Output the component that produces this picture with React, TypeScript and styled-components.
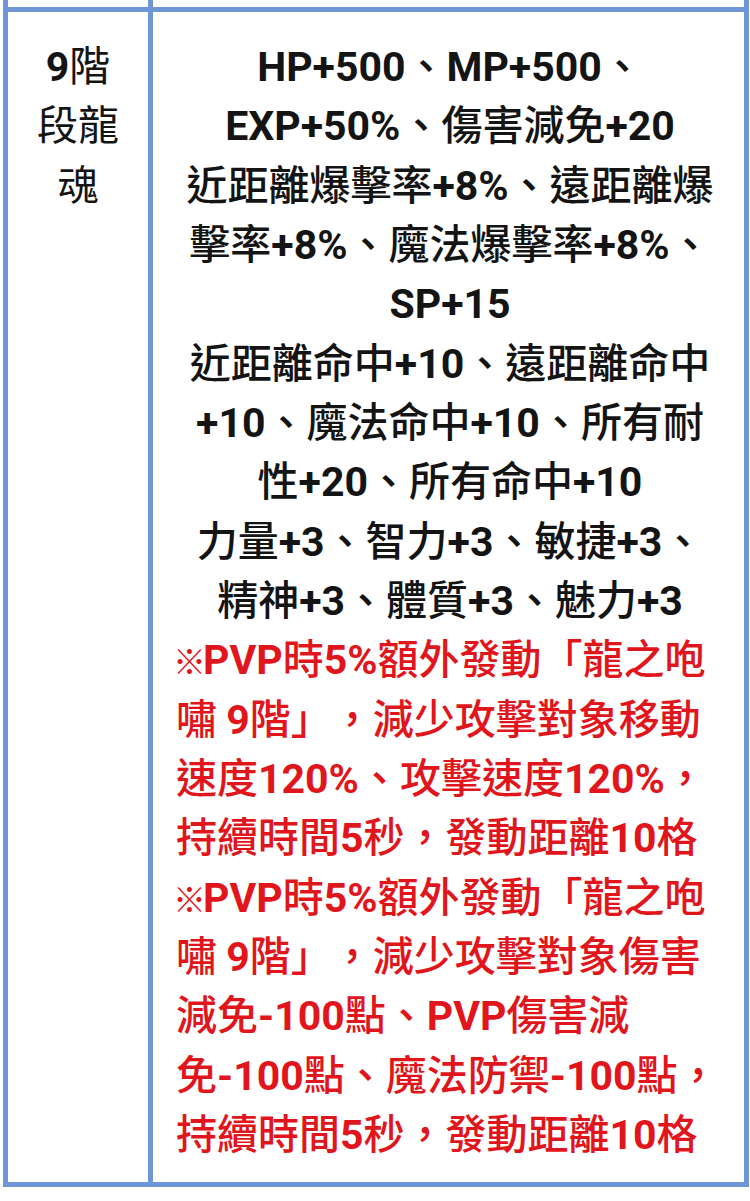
import React from "react";
import styled, { createGlobalStyle } from "styled-components";

const Global = createGlobalStyle`
  html, body { margin: 0; padding: 0; background: #ffffff; }
  body { font-family: "Noto Sans CJK TC", "Noto Sans", sans-serif; }
`;

const Table = styled.div`
  margin-left: 3px;
  width: 746px;
  display: grid;
  grid-template-columns: 140px 591px;
  grid-template-rows: 7px auto;
  column-gap: 5px;
  row-gap: 5px;
  padding: 0 5px 5px 5px;
  box-sizing: border-box;
  background: #6f97d8;
`;

const Cell = styled.div`
  background: #ffffff;
`;

const NameCell = styled(Cell)`
  padding: 22px 20px 21px;
  text-align: center;
`;

const DetailCell = styled(Cell)`
  padding: 22px 20px 21px 23px;
`;

const Line = styled.div<{ $red?: boolean; $left?: boolean }>`
  line-height: 59.33px;
  height: 59.33px;
  white-space: nowrap;
  text-align: ${(p) => (p.$left ? "left" : "center")};
  color: ${(p) => (p.$red ? "#e1161c" : "#141414")};
  font-size: 41px;
`;

const Latin = styled.span`
  font-family: "Roboto", "Noto Sans CJK TC", sans-serif;
  font-weight: 700;
`;

const Han = styled.span<{ $weight: number }>`
  font-family: "Noto Sans CJK TC", sans-serif;
  font-weight: ${(p) => p.$weight};
`;

const Mark = styled.span`
  font-family: "Noto Sans CJK TC", sans-serif;
  font-weight: 900;
  font-size: 33px;
  margin-left: -3px;
  margin-right: -3px;
`;

/* full-width bracket box, so that the browser does not trim its blank half */
const Bracket = styled.span<{ $weight: number; $open: boolean }>`
  display: inline-block;
  width: 41px;
  text-align: ${(p) => (p.$open ? "right" : "left")};
  font-family: "Noto Sans CJK TC", sans-serif;
  font-weight: ${(p) => p.$weight};
`;

const LATIN = /^[A-Za-z0-9+\-%]+$/;

function Mixed({ text, weight }: { text: string; weight: number }) {
  const parts = text
    .split(/([A-Za-z0-9+\-%]+|※|「|」)/)
    .filter((s) => s.length > 0);
  return (
    <>
      {parts.map((p, i) => {
        if (LATIN.test(p)) return <Latin key={i}>{p}</Latin>;
        if (p === "※") return <Mark key={i}>{p}</Mark>;
        if (p === "「" || p === "」")
          return (
            <Bracket key={i} $weight={weight} $open={p === "「"}>
              {p}
            </Bracket>
          );
        return (
          <Han key={i} $weight={weight}>
            {p}
          </Han>
        );
      })}
    </>
  );
}

const nameLines = ["9階", "段龍", "魂"];

const blackLines = [
  "HP+500、MP+500、",
  "EXP+50%、傷害減免+20",
  "近距離爆擊率+8%、遠距離爆",
  "擊率+8%、魔法爆擊率+8%、",
  "SP+15",
  "近距離命中+10、遠距離命中",
  "+10、魔法命中+10、所有耐",
  "性+20、所有命中+10",
  "力量+3、智力+3、敏捷+3、",
  "精神+3、體質+3、魅力+3",
];

const redLines = [
  "※PVP時5%額外發動「龍之咆",
  "嘯 9階」，減少攻擊對象移動",
  "速度120%、攻擊速度120%，",
  "持續時間5秒，發動距離10格",
  "※PVP時5%額外發動「龍之咆",
  "嘯 9階」，減少攻擊對象傷害",
  "減免-100點、PVP傷害減",
  "免-100點、魔法防禦-100點，",
  "持續時間5秒，發動距離10格",
];

export default function App() {
  return (
    <>
      <Global />
      <Table>
        <Cell />
        <Cell />
        <NameCell>
          {nameLines.map((t, i) => (
            <Line key={i}>
              <Mixed text={t} weight={400} />
            </Line>
          ))}
        </NameCell>
        <DetailCell>
          {blackLines.map((t, i) => (
            <Line key={i}>
              <Mixed text={t} weight={500} />
            </Line>
          ))}
          {redLines.map((t, i) => (
            <Line key={i} $red $left>
              <Mixed text={t} weight={500} />
            </Line>
          ))}
        </DetailCell>
      </Table>
    </>
  );
}
